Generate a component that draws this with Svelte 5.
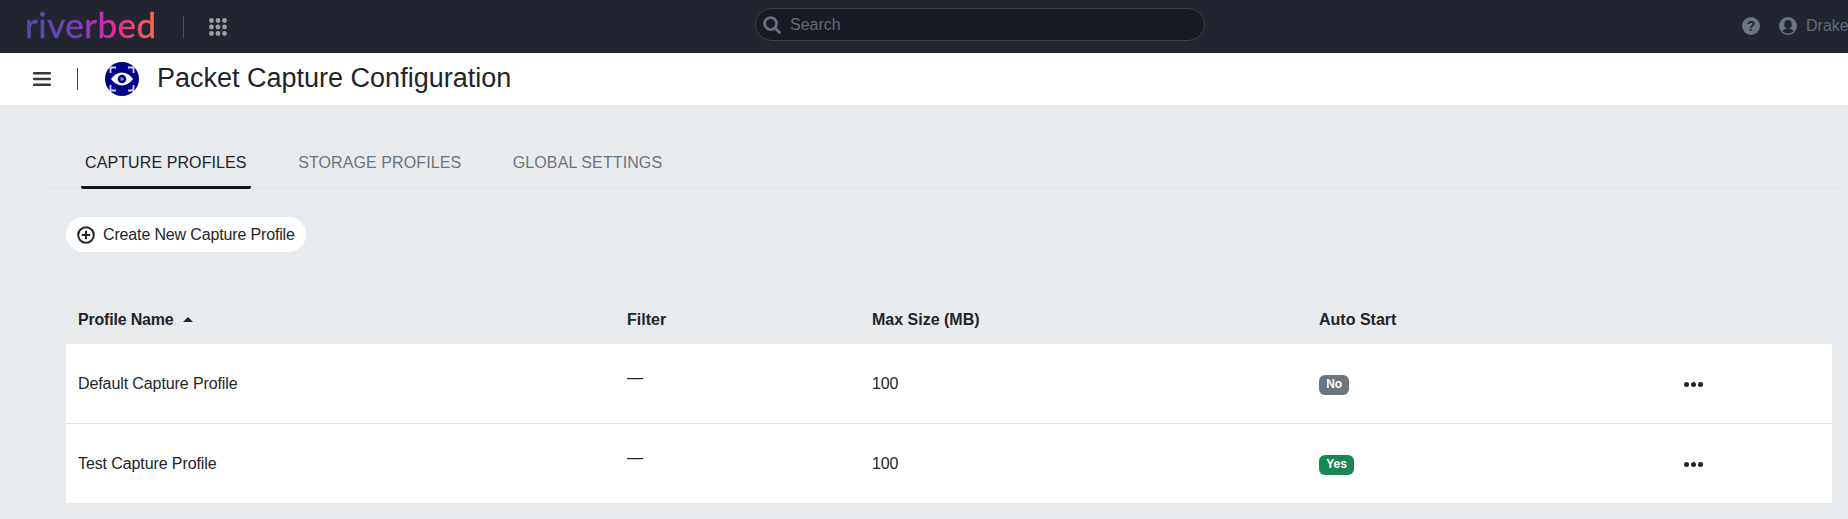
<script>
  const tabs = ['CAPTURE PROFILES', 'STORAGE PROFILES', 'GLOBAL SETTINGS'];
  const rows = [
    { name: 'Default Capture Profile', filter: '—', size: '100', auto: 'No' },
    { name: 'Test Capture Profile', filter: '—', size: '100', auto: 'Yes' }
  ];
</script>

<div class="page">
  <header class="topbar">
    <div class="brand">
      <span class="logo">riverbed</span>
      <span class="vr"></span>
      <svg class="apps" width="18" height="18" viewBox="0 0 18 18" fill="#9aa0a8">
        {#each [2.500, 9, 15.500] as y}
          {#each [2.500, 9, 15.500] as x}
            <circle cx={x} cy={y} r="2.400" />
          {/each}
        {/each}
      </svg>
    </div>
    <div class="search">
      <svg width="18" height="18" viewBox="0 0 18 18" fill="none" stroke="#66707c" stroke-width="2.800">
        <circle cx="7.600" cy="7.600" r="6" />
        <path d="M12 12 L16.500 16.500" stroke-linecap="round" />
      </svg>
      <span>Search</span>
    </div>
    <div class="user">
      <svg width="18" height="18" viewBox="0 0 18 18">
        <circle cx="9" cy="9" r="9" fill="#6c757d" />
        <text x="9" y="14" text-anchor="middle" class="q">?</text>
      </svg>
      <svg class="person" width="18" height="18" viewBox="0 0 18 18">
        <circle cx="9" cy="9" r="9" fill="#6c757d" />
        <ellipse cx="9" cy="7.400" rx="3.800" ry="4.500" fill="#21252f" />
        <path d="M3.400 14.600c.9-2.300 3-3.200 5.600-3.200s4.700.9 5.600 3.200A8 8 0 0 1 9 16.400a8 8 0 0 1-5.600-1.800z" fill="#21252f" />
      </svg>
      <span>Drake</span>
    </div>
  </header>

  <div class="subbar">
    <svg class="burger" width="18" height="14" viewBox="0 0 18 14" fill="#343a40">
      <rect x="0" y="0" width="18" height="2.600" rx="1.200" />
      <rect x="0" y="5.700" width="18" height="2.600" rx="1.200" />
      <rect x="0" y="11.400" width="18" height="2.600" rx="1.200" />
    </svg>
    <span class="vr2"></span>
    <svg class="eye" width="34" height="34" viewBox="0 0 34 34">
      <circle cx="17" cy="17" r="17" fill="#00008b" />
      <g fill="none" stroke="#fff" stroke-width="1.800" opacity="0.850">
        <path d="M5.500 11V5.500H11" />
        <path d="M23 5.500H28.500V11" />
        <path d="M28.500 23V28.500H23" />
        <path d="M11 28.500H5.500V23" />
      </g>
      <path d="M6 17c3-4.300 6.800-6.500 11-6.500s8 2.200 11 6.500c-3 4.300-6.800 6.500-11 6.500s-8-2.200-11-6.500z" fill="#fff" />
      <circle cx="17" cy="17" r="4.300" fill="#00008b" />
      <circle cx="17" cy="17" r="1.700" fill="#8a8ad0" />
    </svg>
    <h1>Packet Capture Configuration</h1>
  </div>

  <main class="content">
    <nav class="tabs">
      {#each tabs as t, i}
        <span class="tab" class:active={i === 0}>{t}</span>
      {/each}
    </nav>

    <button class="create">
      <svg width="18" height="18" viewBox="0 0 18 18" fill="none" stroke="#212529" stroke-width="2">
        <circle cx="9" cy="9" r="7.800" />
        <path d="M9 4.800v8.400M4.800 9h8.400" />
      </svg>
      Create New Capture Profile
    </button>

    <table>
      <thead>
        <tr>
          <th class="c1">Profile Name <span class="sort"></span></th>
          <th class="c2">Filter</th>
          <th class="c3">Max Size (MB)</th>
          <th class="c4">Auto Start</th>
          <th class="c5"></th>
        </tr>
      </thead>
      <tbody>
        {#each rows as r}
          <tr>
            <td>{r.name}</td>
            <td class="dash">{r.filter}</td>
            <td>{r.size}</td>
            <td><span class="badge" class:yes={r.auto === 'Yes'}>{r.auto}</span></td>
            <td>
              <span class="dots"><i></i><i></i><i></i></span>
            </td>
          </tr>
        {/each}
      </tbody>
    </table>
  </main>
</div>

<style>
  :global(body) {
    margin: 0;
    background: #e8ebee;
    font-family: "Liberation Sans", Arial, sans-serif;
    color: #212529;
    overflow: hidden;
  }
  .page {
    width: 1848px;
    height: 519px;
    overflow: hidden;
  }
  .topbar {
    height: 53px;
    background: #21252f;
    position: relative;
    display: flex;
    align-items: center;
    justify-content: space-between;
  }
  .brand {
    display: flex;
    align-items: center;
    padding-left: 25px;
  }
  .logo {
    font-family: Lato, sans-serif;
    font-size: 35px;
    line-height: 40px;
    font-weight: 400;
    letter-spacing: 0.500px;
    width: 133px;
    margin-top: -5px;
    white-space: nowrap;
    -webkit-text-stroke: 0.5px transparent;
    background: linear-gradient(90deg, #4f4ba8 0%, #7b3fbb 42%, #c92cb0 58%, #ea2f90 72%, #ff7048 100%);
    -webkit-background-clip: text;
    background-clip: text;
    color: transparent;
  }
  .vr {
    width: 1px;
    height: 22px;
    background: #4b505a;
    margin-left: 25px;
  }
  .apps {
    margin-left: 25px;
  }
  .search {
    position: absolute;
    left: 755px;
    top: 8px;
    width: 450px;
    height: 33px;
    box-sizing: border-box;
    border: 1px solid #3d424a;
    border-radius: 17px;
    background: #181b24;
    display: flex;
    align-items: center;
    padding-left: 7px;
    font-size: 16px;
    color: #5f6b78;
    gap: 9px;
  }
  .user {
    display: flex;
    align-items: center;
    color: #5f6b78;
    font-size: 16px;
    margin: -1px -3px 0 0;
    width: 128px;
    box-sizing: border-box;
    padding-left: 19px;
    white-space: nowrap;
  }
  .q {
    font: bold 14px "Liberation Sans", sans-serif;
    fill: #21252f;
  }
  .person {
    margin: 0 9px 0 19px;
  }
  .subbar {
    height: 52px;
    background: #fff;
    display: flex;
    align-items: center;
    padding-left: 33px;
  }
  .vr2 {
    width: 1px;
    height: 22px;
    background: #343a40;
    margin-left: 26px;
  }
  .eye {
    margin: 0 0 0 27px;
  }
  h1 {
    margin: -2px 0 0 18px;
    font-size: 27px;
    font-weight: 400;
    line-height: 34px;
    color: #212529;
  }
  .content {
    padding: 0 3px 0 50px;
  }
  .tabs {
    margin-top: 31px;
    height: 53px;
    display: flex;
    box-sizing: border-box;
    border-bottom: 1px solid #dee2e6;
    padding-left: 31px;
    gap: 43.500px;
  }
  .tab {
    height: 53px;
    box-sizing: border-box;
    padding: 0 4px;
    line-height: 53px;
    font-size: 16px;
    letter-spacing: 0.100px;
    color: #6c757d;
  }
  .tab.active {
    color: #212529;
    border-bottom: 3px solid #14171c;
    border-radius: 0 0 2px 2px;
  }
  .create {
    margin: 28px 0 0 16px;
    height: 35px;
    width: 240px;
    border: 0;
    border-radius: 18px;
    background: #fff;
    display: flex;
    align-items: center;
    gap: 8px;
    padding: 0 0 0 11px;
    font: 16px "Liberation Sans", sans-serif;
    letter-spacing: -0.150px;
    color: #212529;
  }
  table {
    margin: 56px 0 0 16px;
    width: 1766px;
    border-collapse: collapse;
    table-layout: fixed;
    font-size: 16px;
  }
  th {
    height: 36px;
    box-sizing: border-box;
    padding: 0 12px 12px;
    text-align: left;
    font-weight: 700;
    vertical-align: middle;
  }
  .c1 { width: 549px; letter-spacing: -0.200px; }
  .c2 { width: 245px; }
  .c3 { width: 447px; }
  .c4 { width: 361px; }
  .sort {
    display: inline-block;
    width: 0;
    height: 0;
    margin-left: 5px;
    vertical-align: 3px;
    border-left: 5px solid transparent;
    border-right: 5px solid transparent;
    border-bottom: 5px solid #212529;
  }
  td {
    height: 79px;
    box-sizing: border-box;
    padding: 2px 12px 0;
    background: #fff;
    vertical-align: middle;
    letter-spacing: -0.100px;
  }
  tbody tr + tr td {
    height: 80px;
    border-top: 1px solid #dee2e6;
  }
  td.dash {
    padding: 0 12px 11px;
  }
  .badge {
    display: inline-block;
    height: 20px;
    line-height: 19px;
    margin-top: 2px;
    padding: 0 7.200px;
    border-radius: 6px;
    background: #6c757d;
    color: #fff;
    font-size: 12px;
    font-weight: 700;
    letter-spacing: 0;
    vertical-align: middle;
  }
  .badge.yes {
    background: #198754;
  }
  .dots {
    display: flex;
    gap: 2px;
    margin-left: 4px;
  }
  .dots i {
    width: 5px;
    height: 5px;
    border-radius: 50%;
    background: #212529;
  }
</style>
